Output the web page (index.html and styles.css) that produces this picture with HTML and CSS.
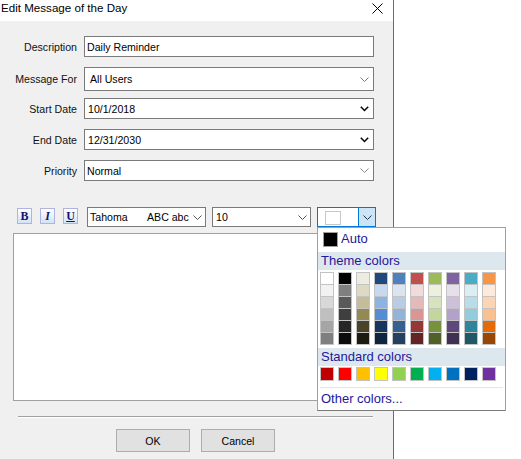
FILE: index.html
```html
<!DOCTYPE html>
<html>
<head>
    <meta charset="UTF-8">
    <meta name="viewport" content="width=device-width, initial-scale=1.0">
    <title>Edit Message of the Day</title>
    <link rel="stylesheet" href="styles.css">
</head>
<body>
    <div class="dialog">
        <!-- Window title bar -->
        <div class="titlebar">
            <span class="title">Edit Message of the Day</span>
            <svg class="close" width="11" height="11" viewBox="0 0 11 11">
                <path d="M0.5 0.5 L10.5 10.5 M10.5 0.5 L0.5 10.5" stroke="#000" stroke-width="1" fill="none"/>
            </svg>
        </div>

        <!-- Message fields -->
        <div class="form">
            <div class="form-row">
                <span class="form-label">Description</span>
                <div class="field text-field">Daily Reminder</div>
            </div>
            <div class="form-row tall">
                <span class="form-label">Message For</span>
                <div class="field combo-field">
                    <span class="field-text">All Users</span>
                    <svg class="chevron" width="9" height="5" viewBox="0 0 9 5"><polyline points="0.5,0.5 4.5,4.5 8.5,0.5" fill="none" stroke="#7a7a7a"/></svg>
                </div>
            </div>
            <div class="form-row">
                <span class="form-label">Start Date</span>
                <div class="field date-field">
                    <span class="field-text">10/1/2018</span>
                    <svg class="chevron" width="9" height="6" viewBox="0 0 9 6"><polyline points="0.8,0.8 4.5,4.5 8.2,0.8" fill="none" stroke="#000" stroke-width="1.5"/></svg>
                </div>
            </div>
            <div class="form-row">
                <span class="form-label">End Date</span>
                <div class="field date-field">
                    <span class="field-text">12/31/2030</span>
                    <svg class="chevron" width="9" height="6" viewBox="0 0 9 6"><polyline points="0.8,0.8 4.5,4.5 8.2,0.8" fill="none" stroke="#000" stroke-width="1.5"/></svg>
                </div>
            </div>
            <div class="form-row">
                <span class="form-label">Priority</span>
                <div class="field text-field">
                    <span class="field-text">Normal</span>
                    <svg class="chevron" width="9" height="5" viewBox="0 0 9 5"><polyline points="0.5,0.5 4.5,4.5 8.5,0.5" fill="none" stroke="#8a8a8a"/></svg>
                </div>
            </div>
        </div>

        <!-- Formatting toolbar -->
        <div class="toolbar">
            <button class="fmt-btn">B</button>
            <button class="fmt-btn italic">I</button>
            <button class="fmt-btn underline">U</button>
            <div class="combo font-combo">
                <span class="font-name">Tahoma</span>
                <span class="font-sample">ABC abc</span>
                <svg class="chevron" width="9" height="5" viewBox="0 0 9 5"><polyline points="0.5,0.5 4.5,4.5 8.5,0.5" fill="none" stroke="#555"/></svg>
            </div>
            <div class="combo size-combo">
                <span class="field-text">10</span>
                <svg class="chevron" width="9" height="5" viewBox="0 0 9 5"><polyline points="0.5,0.5 4.5,4.5 8.5,0.5" fill="none" stroke="#555"/></svg>
            </div>
            <div class="combo color-combo">
                <span class="color-swatch"></span>
                <span class="color-drop">
                    <svg width="9" height="5" viewBox="0 0 9 5"><polyline points="0.5,0.5 4.5,4.5 8.5,0.5" fill="none" stroke="#333"/></svg>
                </span>
            </div>
        </div>

        <!-- Message body editor -->
        <div class="editor"></div>

        <div class="separator"></div>

        <div class="buttons">
            <button class="dlg-btn">OK</button>
            <button class="dlg-btn">Cancel</button>
        </div>

        <!-- Colour drop-down, open over the editor -->
        <div class="color-popup">
            <div class="auto-row">
                <span class="auto-swatch"></span>
                <span>Auto</span>
            </div>
            <div class="popup-band">Theme colors</div>
            <div class="theme-grid" id="themeGrid"></div>
            <div class="popup-band standard-band">Standard colors</div>
            <div class="standard-row" id="standardRow"></div>
            <div class="other-colors">Other colors...</div>
        </div>
    </div>

    <script>
        // Office theme palette, one array per column (base colour, then tints and shades)
        const themeColumns = [
            ['#FFFFFF', '#F2F2F2', '#D8D8D8', '#BFBFBF', '#A5A5A5', '#7F7F7F'],
            ['#000000', '#7F7F7F', '#595959', '#3F3F3F', '#262626', '#0C0C0C'],
            ['#EEECE1', '#DDD9C3', '#C4BD97', '#938953', '#494429', '#1D1B10'],
            ['#1F497D', '#C6D9F0', '#8DB3E2', '#548DD4', '#17365D', '#0F243E'],
            ['#4F81BD', '#DBE5F1', '#B8CCE4', '#95B3D7', '#366092', '#244061'],
            ['#C0504D', '#F2DCDB', '#E5B9B7', '#D99694', '#953734', '#632423'],
            ['#9BBB59', '#EBF1DD', '#D7E3BC', '#C3D69B', '#76923C', '#4F6128'],
            ['#8064A2', '#E5E0EC', '#CCC1D9', '#B2A2C7', '#5F497A', '#3F3151'],
            ['#4BACC6', '#DBEEF3', '#B7DDE8', '#92CDDC', '#31859B', '#205867'],
            ['#F79646', '#FDEADA', '#FBD5B5', '#FAC08F', '#E36C09', '#974806']
        ];

        const standardColors = ['#C00000', '#FF0000', '#FFC000', '#FFFF00', '#92D050',
                                '#00B050', '#00B0F0', '#0070C0', '#002060', '#7030A0'];

        const grid = document.getElementById('themeGrid');
        themeColumns.forEach(column => {
            const col = document.createElement('div');
            col.className = 'swatch-col';
            column.forEach(color => {
                const cell = document.createElement('span');
                cell.className = 'swatch';
                cell.style.background = color;
                col.appendChild(cell);
            });
            grid.appendChild(col);
        });

        const row = document.getElementById('standardRow');
        standardColors.forEach(color => {
            const cell = document.createElement('span');
            cell.className = 'std-swatch';
            cell.style.background = color;
            row.appendChild(cell);
        });
    </script>
</body>
</html>
```

FILE: styles.css
```css
body {
    margin: 0;
    font-family: "Liberation Sans", Arial, sans-serif;
    font-size: 10.6px;
    color: #000;
    background: #fff;
}

.dialog {
    position: relative;
    width: 393px;
    height: 459px;
    background: #f0f0f0;
    border-right: 1px solid #1f7fd0;
}

.titlebar {
    display: flex;
    align-items: flex-start;
    height: 21px;
    background: #fff;
}

.title {
    font-size: 11.6px;
    line-height: 16px;
    padding-left: 1px;
}

.close {
    margin-left: auto;
    margin-right: 10px;
    margin-top: 3px;
}

/* form rows */
.form {
    display: flex;
    flex-direction: column;
    gap: 10px;
    padding-top: 15px;
}

.form-row {
    display: flex;
    height: 21px;
}

.form-row.tall {
    height: 24px;
    margin-bottom: -3px;
}

.form-label {
    width: 77px;
    display: flex;
    align-items: center;
    justify-content: flex-end;
    color: #111;
}

.field {
    margin-left: 7px;
    width: 290px;
    box-sizing: border-box;
    border: 1px solid #7a7a7a;
    background: #fff;
    display: flex;
    align-items: center;
    padding: 0 4px 0 2px;
}

.combo-field {
    padding-left: 5px;
}

.date-field {
    padding-left: 3px;
}

.field-text {
    flex: 1;
}

/* toolbar */
.toolbar {
    display: flex;
    align-items: flex-start;
    height: 20px;
    margin-top: 26px;
    padding-left: 17px;
}

.fmt-btn {
    width: 15px;
    height: 16px;
    margin-top: 1px;
    margin-right: 8px;
    padding: 0;
    box-sizing: border-box;
    border: 1px solid #b0b3e0;
    background: linear-gradient(#ffffff, #d3e3f7);
    font-family: "Liberation Serif", serif;
    font-weight: bold;
    font-size: 12px;
    line-height: 13px;
    color: #14146e;
}

.fmt-btn.italic {
    font-style: italic;
}

.fmt-btn.underline {
    text-decoration: underline;
}

.combo {
    height: 20px;
    box-sizing: border-box;
    border: 1px solid #7a7a7a;
    background: #fff;
    display: flex;
    align-items: center;
}

.font-combo {
    width: 119px;
    margin-left: 1px;
    padding: 0 3px 0 2px;
}

.font-name {
    width: 57px;
}

.font-sample {
    flex: 1;
}

.size-combo {
    width: 99px;
    margin-left: 6px;
    padding: 0 3px 0 3px;
}

.color-combo {
    width: 59px;
    margin-left: 6px;
    border-color: #0078d7;
    align-items: stretch;
}

.color-swatch {
    width: 16px;
    height: 14px;
    box-sizing: border-box;
    margin: 3px 0 0 7px;
    border: 1px solid #c8c8c8;
    background: #fff;
}

.color-drop {
    margin-left: auto;
    width: 16px;
    background: #cce4f7;
    border-left: 1px solid #0078d7;
    display: flex;
    align-items: center;
    justify-content: center;
}

/* editor and footer */
.editor {
    margin: 6px 0 0 13px;
    width: 368px;
    height: 168px;
    box-sizing: border-box;
    border: 1px solid #a0a0a0;
    background: #fff;
}

.separator {
    margin: 15px 0 0 18px;
    width: 355px;
    border-top: 1px solid #a0a0a0;
    border-bottom: 1px solid #fff;
}

.buttons {
    display: flex;
    gap: 11px;
    margin-top: 11px;
    padding-left: 116px;
}

.dlg-btn {
    width: 74px;
    height: 23px;
    padding: 0;
    background: #e1e1e1;
    border: 1px solid #adadad;
    font: inherit;
    color: #000;
}

/* colour drop-down */
.color-popup {
    position: absolute;
    left: 317px;
    top: 227px;
    width: 189px;
    box-sizing: border-box;
    border: 1px solid #a0a0a0;
    border-bottom-color: #7a7a7a;
    background: #fff;
    font-size: 13px;
    color: #24179a;
}

.auto-row {
    display: flex;
    align-items: flex-start;
    height: 24px;
}

.auto-row span:last-child {
    margin-left: 3px;
    padding-top: 2px;
    line-height: 18px;
}

.auto-swatch {
    width: 15px;
    height: 15px;
    box-sizing: border-box;
    margin: 4px 0 0 5px;
    border: 1px solid #a0a0a0;
    background: #000;
}

.popup-band {
    height: 18px;
    line-height: 18px;
    padding-left: 3px;
    background: #dde7ee;
}

.theme-grid {
    display: flex;
    gap: 4px;
    margin-top: 2px;
    padding-left: 2px;
}

.swatch-col {
    display: flex;
    flex-direction: column;
}

.swatch {
    width: 14px;
    height: 13px;
    box-sizing: border-box;
    border: 1px solid #c3c3c3;
}

.swatch + .swatch {
    margin-top: -1px;
}

.standard-band {
    margin-top: 3px;
}

.standard-row {
    display: flex;
    gap: 4px;
    margin-top: 1px;
    padding-left: 2px;
}

.std-swatch {
    width: 14px;
    height: 14px;
    box-sizing: border-box;
    border: 1px solid #c3c3c3;
}

.other-colors {
    margin: 6px 2px 0 2px;
    height: 22px;
    line-height: 21px;
    padding-left: 1px;
    border-top: 1px solid #e6e6e6;
}
```
